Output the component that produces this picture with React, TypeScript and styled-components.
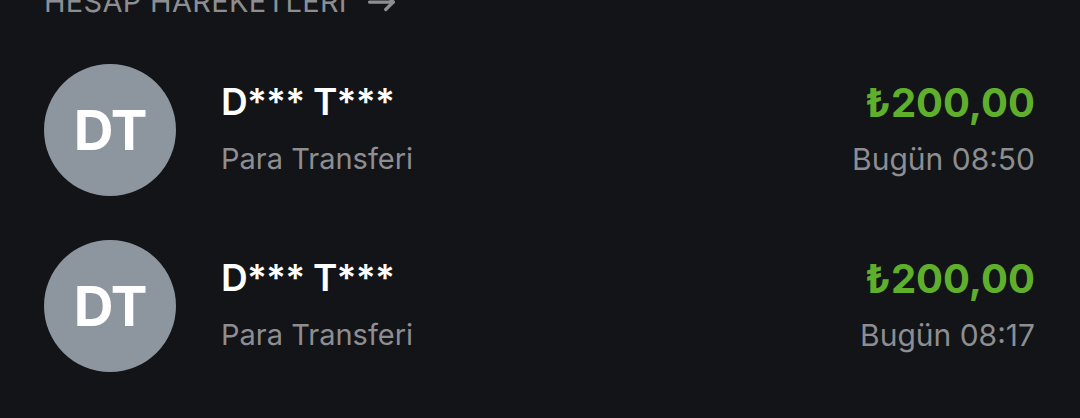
import styled, { createGlobalStyle } from 'styled-components';

const GlobalStyle = createGlobalStyle`
  html, body {
    margin: 0;
    padding: 0;
    background: #131417;
    overflow: hidden;
  }
  body {
    font-family: Inter, "Noto Sans", sans-serif;
  }
`;

const Page = styled.div`
  width: 1080px;
  height: 418px;
  background: #131417;
  overflow: hidden;
`;

const Section = styled.section`
  margin-top: -18px;
  padding: 0 45px 0 44px;
`;

const SectionTitle = styled.h2`
  margin: 0 0 42px;
  display: flex;
  align-items: center;
  gap: 20px;
  font-size: 29px;
  font-weight: 400;
  letter-spacing: 0.3px;
  color: #8d8e92;
  line-height: 40px;
`;

const List = styled.ul`
  list-style: none;
  margin: 0;
  padding: 0;
  display: flex;
  flex-direction: column;
  gap: 44px;
`;

const Row = styled.li`
  display: flex;
  align-items: center;
  height: 132px;
`;

const Avatar = styled.div`
  width: 132px;
  height: 132px;
  border-radius: 50%;
  background: #8d969f;
  color: #ffffff;
  display: flex;
  align-items: center;
  justify-content: center;
  font-size: 55px;
  font-weight: 700;
  letter-spacing: -1px;
  flex-shrink: 0;
`;

const Info = styled.div`
  margin-left: 45px;
  flex: 1;
  display: flex;
  flex-direction: column;
  gap: 16px;
  padding-bottom: 4px;
`;

const Name = styled.div`
  color: #ffffff;
  font-size: 37px;
  font-weight: 600;
  letter-spacing: -0.8px;
  line-height: 46px;
`;

const Sub = styled.div`
  color: #8d8e92;
  font-size: 29px;
  line-height: 36px;
`;

const Right = styled.div`
  display: flex;
  flex-direction: column;
  align-items: flex-end;
  gap: 15px;
  padding-bottom: 4px;
`;

const Amount = styled.div`
  color: #5fae2c;
  font-size: 40px;
  font-weight: 700;
  line-height: 46px;
`;

const Time = styled.div`
  color: #8d8e92;
  font-size: 30px;
  line-height: 36px;
`;

const Arrow = () => (
  <svg width="30" height="30" viewBox="0 0 24 24" fill="none" stroke="#8d8e92" strokeWidth="2.6" strokeLinecap="round" strokeLinejoin="round">
    <path d="M2 12h19" />
    <path d="M15 6l6 6-6 6" />
  </svg>
);

const items = [
  { initials: 'DT', name: 'D*** T***', type: 'Para Transferi', amount: '₺200,00', time: 'Bugün 08:50' },
  { initials: 'DT', name: 'D*** T***', type: 'Para Transferi', amount: '₺200,00', time: 'Bugün 08:17' },
];

export default function App() {
  return (
    <Page>
      <GlobalStyle />
      <Section>
        <SectionTitle>
          HESAP HAREKETLERİ <Arrow />
        </SectionTitle>
        <List>
          {items.map((it, i) => (
            <Row key={i}>
              <Avatar>{it.initials}</Avatar>
              <Info>
                <Name>{it.name}</Name>
                <Sub>{it.type}</Sub>
              </Info>
              <Right>
                <Amount>{it.amount}</Amount>
                <Time>{it.time}</Time>
              </Right>
            </Row>
          ))}
        </List>
      </Section>
    </Page>
  );
}
